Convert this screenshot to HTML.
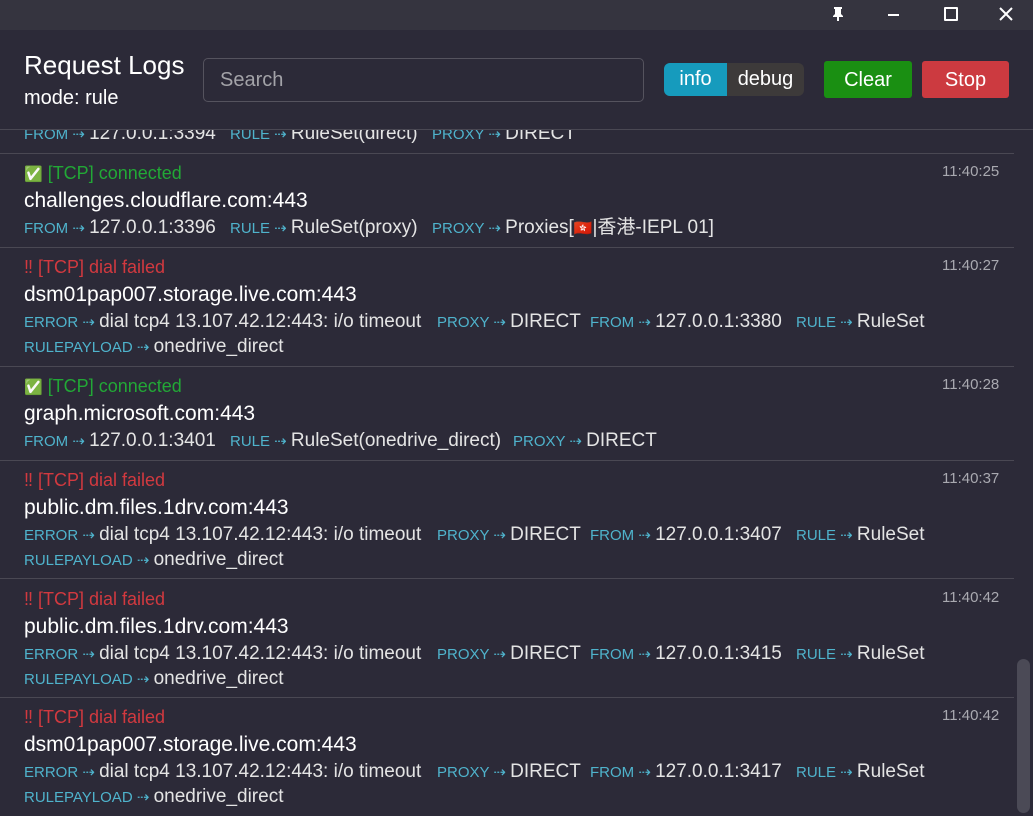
<!DOCTYPE html>
<html><head><meta charset="utf-8"><style>
*{margin:0;padding:0;box-sizing:border-box}
body{width:1033px;height:816px;overflow:hidden;background:#2c2a38;font-family:"Liberation Sans","Noto Sans CJK SC",sans-serif;color:#ececec;position:relative}
.tb{position:absolute;left:0;top:0;width:1033px;height:30px;background:#35343f}
.hd{position:absolute;left:0;top:30px;width:1033px;height:100px;background:#2c2a38;border-bottom:1px solid #4a4853;z-index:2}
.a{position:absolute;white-space:nowrap;line-height:24px}
.l{color:#4fb3cc;font-size:15px}
.v{font-size:19px;color:#e4e4e4}
.em{font-size:15px;line-height:1}
.sep{position:absolute;left:0;width:1014px;height:1px;background:#4a4853}
.ok{color:#22a836;font-size:18px}
.er{color:#d2393f;font-size:18px}
.host{font-size:21px;color:#fff}
.tm{font-size:15px;color:#a9a9b0;left:942px}
.btn{color:#fff;font-size:20px;text-align:center}
</style></head><body>
<div class="tb">
<svg class="a" style="left:831px;top:6px" width="14" height="16" viewBox="0 0 14 16"><path d="M3 1h8v2h-1v5l2 2v1H2v-1l2-2V3H3z" fill="#fff"/><rect x="6" y="11" width="2" height="4" fill="#fff"/></svg>
<div class="a" style="left:888px;top:14px;width:11px;height:2px;background:#fff"></div>
<div class="a" style="left:944px;top:7px;width:14px;height:14px;border:2px solid #fff;border-radius:1px"></div>
<svg class="a" style="left:999px;top:7px" width="14" height="14"><path d="M1 1L13 13M13 1L1 13" stroke="#fff" stroke-width="2"/></svg>
</div>
<div class="hd">
<div class="a" style="left:24px;top:20px;font-size:26px;color:#fff;line-height:30px">Request Logs</div>
<div class="a" style="left:24px;top:56px;font-size:20px;color:#fff">mode: rule</div>
<div class="a" style="left:203px;top:28px;width:441px;height:44px;border:1px solid #55535e;border-radius:5px;font-size:20px;color:#a3a3a8;padding:9px 16px">Search</div>
<div class="a" style="left:664px;top:33px;width:140px;height:33px;border-radius:6px;background:#3d3a3a;overflow:hidden">
<div class="a btn" style="left:0;top:0;width:63px;height:33px;background:#169bbd;line-height:33px">info</div>
<div class="a btn" style="left:63px;top:0;width:77px;height:33px;line-height:33px">debug</div></div>
<div class="a btn" style="left:824px;top:31px;width:88px;height:37px;border-radius:3px;background:#1a8f12;line-height:38px">Clear</div>
<div class="a btn" style="left:922px;top:31px;width:87px;height:37px;border-radius:3px;background:#cc3a40;line-height:38px">Stop</div>
</div>

<div class="a" style="left:24px;top:122px"><span class="l">FROM ⇢ </span><span class="v">127.0.0.1:3394</span></div>
<div class="a" style="left:230px;top:122px"><span class="l">RULE ⇢ </span><span class="v">RuleSet(direct)</span></div>
<div class="a" style="left:432px;top:122px"><span class="l">PROXY ⇢ </span><span class="v">DIRECT</span></div>

<div class="sep" style="top:153px"></div>
<div class="a ok" style="left:24px;top:161px"><span class="em">✅</span> [TCP] connected</div>
<div class="a tm" style="top:160px">11:40:25</div>
<div class="a host" style="left:24px;top:189px">challenges.cloudflare.com:443</div>
<div class="a" style="left:24px;top:216px"><span class="l">FROM ⇢ </span><span class="v">127.0.0.1:3396</span></div>
<div class="a" style="left:230px;top:216px"><span class="l">RULE ⇢ </span><span class="v">RuleSet(proxy)</span></div>
<div class="a" style="left:432px;top:216px"><span class="l">PROXY ⇢ </span><span class="v">Proxies[<span class="em">🇭🇰</span>|香港-IEPL 01]</span></div>

<div class="sep" style="top:247px"></div>
<div class="a er" style="left:24px;top:255px">‼ [TCP] dial failed</div>
<div class="a tm" style="top:254px">11:40:27</div>
<div class="a host" style="left:24px;top:283px">dsm01pap007.storage.live.com:443</div>
<div class="a" style="left:24px;top:310px"><span class="l">ERROR ⇢ </span><span class="v">dial tcp4 13.107.42.12:443: i/o timeout</span></div>
<div class="a" style="left:437px;top:310px"><span class="l">PROXY ⇢ </span><span class="v">DIRECT</span></div>
<div class="a" style="left:590px;top:310px"><span class="l">FROM ⇢ </span><span class="v">127.0.0.1:3380</span></div>
<div class="a" style="left:796px;top:310px"><span class="l">RULE ⇢ </span><span class="v">RuleSet</span></div>
<div class="a" style="left:24px;top:335px"><span class="l">RULEPAYLOAD ⇢ </span><span class="v">onedrive_direct</span></div>

<div class="sep" style="top:366px"></div>
<div class="a ok" style="left:24px;top:374px"><span class="em">✅</span> [TCP] connected</div>
<div class="a tm" style="top:373px">11:40:28</div>
<div class="a host" style="left:24px;top:402px">graph.microsoft.com:443</div>
<div class="a" style="left:24px;top:429px"><span class="l">FROM ⇢ </span><span class="v">127.0.0.1:3401</span></div>
<div class="a" style="left:230px;top:429px"><span class="l">RULE ⇢ </span><span class="v">RuleSet(onedrive_direct)</span></div>
<div class="a" style="left:513px;top:429px"><span class="l">PROXY ⇢ </span><span class="v">DIRECT</span></div>

<div class="sep" style="top:460px"></div>
<div class="a er" style="left:24px;top:468px">‼ [TCP] dial failed</div>
<div class="a tm" style="top:467px">11:40:37</div>
<div class="a host" style="left:24px;top:496px">public.dm.files.1drv.com:443</div>
<div class="a" style="left:24px;top:523px"><span class="l">ERROR ⇢ </span><span class="v">dial tcp4 13.107.42.12:443: i/o timeout</span></div>
<div class="a" style="left:437px;top:523px"><span class="l">PROXY ⇢ </span><span class="v">DIRECT</span></div>
<div class="a" style="left:590px;top:523px"><span class="l">FROM ⇢ </span><span class="v">127.0.0.1:3407</span></div>
<div class="a" style="left:796px;top:523px"><span class="l">RULE ⇢ </span><span class="v">RuleSet</span></div>
<div class="a" style="left:24px;top:548px"><span class="l">RULEPAYLOAD ⇢ </span><span class="v">onedrive_direct</span></div>

<div class="sep" style="top:578px"></div>
<div class="a er" style="left:24px;top:587px">‼ [TCP] dial failed</div>
<div class="a tm" style="top:586px">11:40:42</div>
<div class="a host" style="left:24px;top:615px">public.dm.files.1drv.com:443</div>
<div class="a" style="left:24px;top:642px"><span class="l">ERROR ⇢ </span><span class="v">dial tcp4 13.107.42.12:443: i/o timeout</span></div>
<div class="a" style="left:437px;top:642px"><span class="l">PROXY ⇢ </span><span class="v">DIRECT</span></div>
<div class="a" style="left:590px;top:642px"><span class="l">FROM ⇢ </span><span class="v">127.0.0.1:3415</span></div>
<div class="a" style="left:796px;top:642px"><span class="l">RULE ⇢ </span><span class="v">RuleSet</span></div>
<div class="a" style="left:24px;top:667px"><span class="l">RULEPAYLOAD ⇢ </span><span class="v">onedrive_direct</span></div>

<div class="sep" style="top:697px"></div>
<div class="a er" style="left:24px;top:705px">‼ [TCP] dial failed</div>
<div class="a tm" style="top:704px">11:40:42</div>
<div class="a host" style="left:24px;top:733px">dsm01pap007.storage.live.com:443</div>
<div class="a" style="left:24px;top:760px"><span class="l">ERROR ⇢ </span><span class="v">dial tcp4 13.107.42.12:443: i/o timeout</span></div>
<div class="a" style="left:437px;top:760px"><span class="l">PROXY ⇢ </span><span class="v">DIRECT</span></div>
<div class="a" style="left:590px;top:760px"><span class="l">FROM ⇢ </span><span class="v">127.0.0.1:3417</span></div>
<div class="a" style="left:796px;top:760px"><span class="l">RULE ⇢ </span><span class="v">RuleSet</span></div>
<div class="a" style="left:24px;top:785px"><span class="l">RULEPAYLOAD ⇢ </span><span class="v">onedrive_direct</span></div>

<div class="a" style="left:1017px;top:659px;width:13px;height:154px;border-radius:7px;background:#4b4a56"></div>
</body></html>
